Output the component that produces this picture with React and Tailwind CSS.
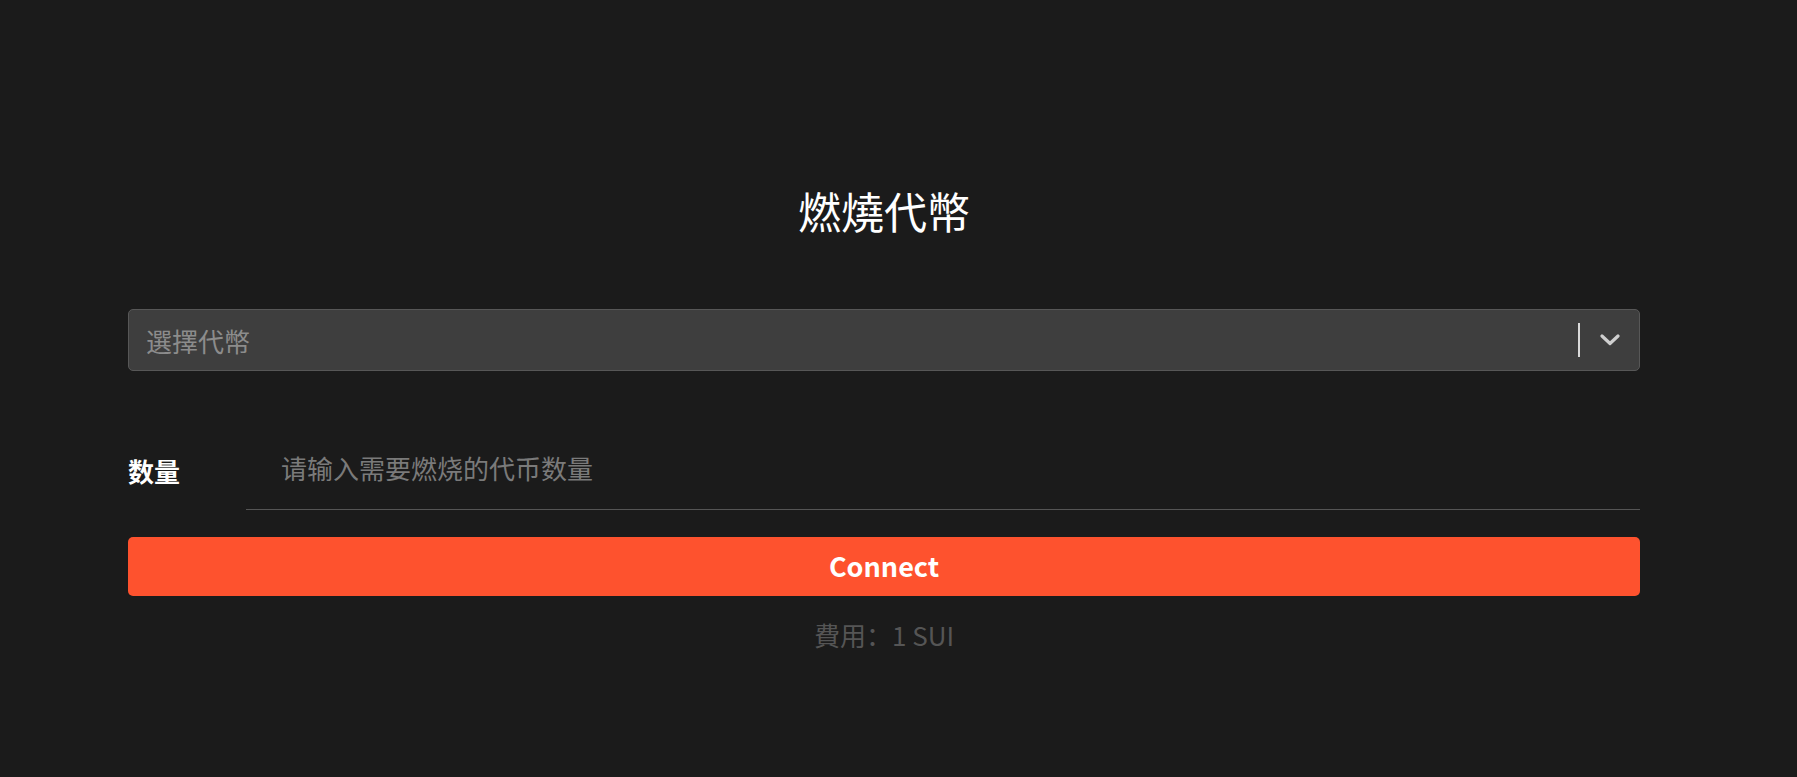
import React from "react";

export default function App() {
  const font = { fontFamily: '"Noto Sans CJK SC", "Noto Sans CJK TC", "Noto Sans", sans-serif' };
  return (
    <div className="min-h-[777px] w-full bg-[#1b1b1b]" style={font}>
      <div className="ml-[128px] w-[1512px] pt-[180px] pb-[100px]">
        <h1 className="text-center text-[43px] leading-[61px] font-normal text-white">燃燒代幣</h1>

        <div className="mt-[68px] flex h-[62px] items-center rounded-[5px] border border-[#575757] bg-[#3e3e3e] pl-[17px] pr-[19px]">
          <span className="flex-1 text-[26px] text-[#8c8c8c]">選擇代幣</span>
          <span className="h-[34px] w-[2px] bg-[#d9d9d9]"></span>
          <svg className="ml-[20px]" width="20" height="12" viewBox="0 0 20 12" fill="none">
            <path d="M2 2 L10 9.5 L18 2" stroke="#cfcfcf" strokeWidth="3.2" strokeLinecap="round" strokeLinejoin="round" />
          </svg>
        </div>

        <div className="mt-[59px] flex items-center">
          <label className="w-[118px] text-[26px] font-bold text-white">数量</label>
          <div className="flex h-[80px] flex-1 items-center border-b border-[#555555] pb-[4px] pl-[35px]">
            <span className="text-[26px] text-[#7a7a7a]">请输入需要燃烧的代币数量</span>
          </div>
        </div>

        <button className="mt-[27px] flex h-[59px] w-full items-center justify-center rounded-[5px] bg-[#fe522e] text-[27px] font-bold text-white">
          Connect
        </button>

        <p className="mt-[20px] text-center text-[26px] leading-[38px] text-[#555555]">費用：1 SUI</p>
      </div>
    </div>
  );
}
